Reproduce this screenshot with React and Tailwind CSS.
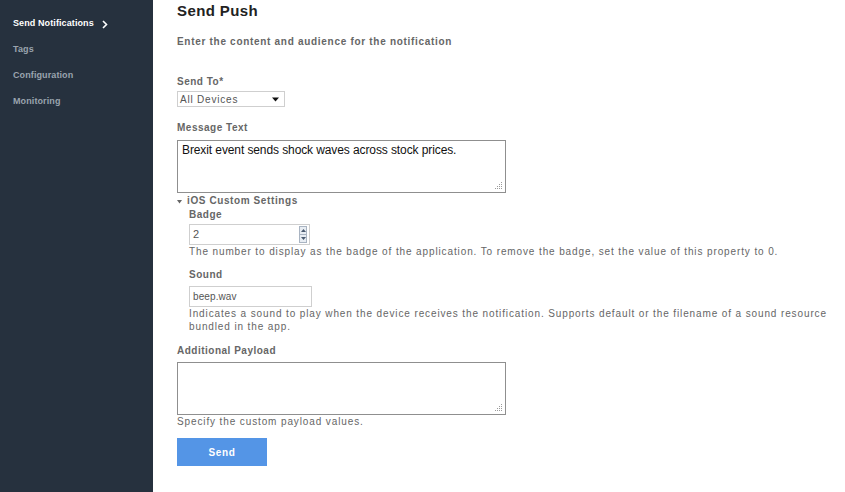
import React from 'react';

const navItems = [
  { label: 'Send Notifications', active: true },
  { label: 'Tags' },
  { label: 'Configuration' },
  { label: 'Monitoring' },
];

const Grip = () => (
  <svg className="absolute right-[2px] bottom-[2px]" width="8" height="8" viewBox="0 0 8 8">
    {[[6, 1], [4, 3], [6, 3], [2, 5], [4, 5], [6, 5], [0, 7], [2, 7], [4, 7], [6, 7]].map(([x, y], i) => (
      <rect key={i} x={x} y={y - 1} width="1" height="1" fill="#9a9a9a" />
    ))}
  </svg>
);

const Label = ({ children, className = '' }) => (
  <div className={`text-[10px] leading-[14px] font-bold tracking-[0.5px] text-[#666] ${className}`}>{children}</div>
);

const Help = ({ children, className = '' }) => (
  <div className={`text-[10px] leading-[13px] tracking-[0.88px] text-[#666] ${className}`}>{children}</div>
);

export default function App() {
  return (
    <div className="flex w-[845px] h-[492px] bg-white font-['Liberation_Sans',Arial,sans-serif] overflow-hidden">
      <aside className="w-[153px] shrink-0 bg-[#26313e] pt-[11px]">
        {navItems.map((item) => (
          <div
            key={item.label}
            className={`flex items-center h-[26px] pl-[13px] text-[9px] font-bold tracking-[0.1px] ${
              item.active ? 'text-white' : 'text-[#9aa4ae]'
            }`}
          >
            <span>{item.label}</span>
            {item.active && (
              <svg className="ml-[8px]" width="6" height="9" viewBox="0 0 6 9">
                <path d="M1 1 L4.5 4.5 L1 8" stroke="white" strokeWidth="1.6" fill="none" />
              </svg>
            )}
          </div>
        ))}
      </aside>

      <main className="flex-1 pl-[24px] pr-[14px] pt-[2px]">
        <h1 className="text-[15px] leading-[18px] font-bold tracking-[0.4px] text-[#222]">Send Push</h1>
        <Label className="mt-[15px] tracking-[0.7px]">Enter the content and audience for the notification</Label>

        <Label className="mt-[26px]">Send To*</Label>
        <div className="mt-[2px] w-[108px] h-[16px] border border-[#cfcfcf] flex items-center justify-between pl-[2px] pr-[5px]">
          <span className="text-[10px] tracking-[0.8px] text-[#555]">All Devices</span>
          <svg width="7" height="6" viewBox="0 0 7 6">
            <path d="M0 1.5 H7 L3.5 5.5 Z" fill="#111" />
          </svg>
        </div>

        <Label className="mt-[14px]">Message Text</Label>
        <div className="relative mt-[5px] w-[329px] h-[53px] border border-[#8f8f8f] px-[4px] pt-[3px]">
          <div className="text-[12px] leading-[13px] tracking-[-0.1px] text-[#111]">
            Brexit event sends shock waves across stock prices.
          </div>
          <Grip />
        </div>

        <div className="mt-[1px] flex items-center text-[10px] leading-[14px] font-bold tracking-[0.6px] text-[#666]">
          <svg className="mr-[5px]" width="5" height="5" viewBox="0 0 5 5">
            <path d="M0 1 H5 L2.5 4.5 Z" fill="#666" />
          </svg>
          iOS Custom Settings
        </div>

        <div className="pl-[12px]">
          <Label>Badge</Label>
          <div className="mt-[2px] w-[121px] h-[21px] border border-[#cfcfcf] flex items-center justify-between pl-[3px] pr-[2px]">
            <span className="text-[11px] text-[#555]">2</span>
            <div className="flex flex-col w-[8px] h-[17px] border border-[#a9b4c2]">
              <div className="flex-1 bg-[#e8edf3] flex items-center justify-center border-b border-[#a9b4c2]">
                <svg width="5" height="3" viewBox="0 0 5 3"><path d="M0 3 H5 L2.5 0 Z" fill="#4a5a70" /></svg>
              </div>
              <div className="flex-1 bg-[#e8edf3] flex items-center justify-center">
                <svg width="5" height="3" viewBox="0 0 5 3"><path d="M0 0 H5 L2.5 3 Z" fill="#4a5a70" /></svg>
              </div>
            </div>
          </div>
          <Help>
            The number to display as the badge of the application. To remove the badge, set the value of this property to 0.
          </Help>

          <Label className="mt-[10px]">Sound</Label>
          <div className="mt-[4px] w-[123px] h-[21px] border border-[#cfcfcf] flex items-center pl-[3px]">
            <span className="text-[10px] tracking-[0.1px] text-[#555]">beep.wav</span>
          </div>
          <Help>
            Indicates a sound to play when the device receives the notification. Supports default or the filename of a sound resource bundled in the app.
          </Help>
        </div>

        <Label className="mt-[11px]">Additional Payload</Label>
        <div className="relative mt-[4px] w-[329px] h-[53px] border border-[#8f8f8f]">
          <Grip />
        </div>
        <Help>Specify the custom payload values.</Help>

        <button className="mt-[10px] w-[90px] h-[28px] bg-[#5495e6] text-white text-[10px] font-bold tracking-[0.6px]">
          Send
        </button>
      </main>
    </div>
  );
}
